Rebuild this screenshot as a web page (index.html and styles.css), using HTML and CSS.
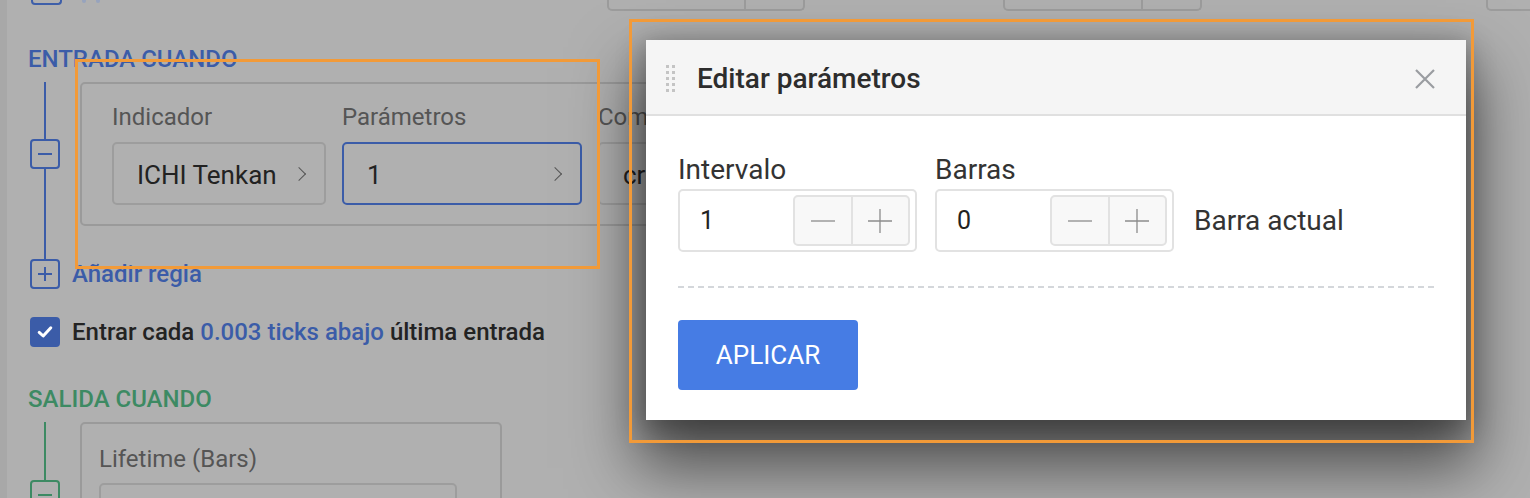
FILE: index.html
```html
<!DOCTYPE html>
<html lang="es">
<head>
<meta charset="utf-8">
<title>Editar parámetros</title>
<link rel="stylesheet" href="styles.css">
</head>
<body>
<div class="page">
  <div class="rail"></div>
  <main class="content">
    <div class="top-row">
      <span class="top-check"></span>
      <span class="top-marks"><i></i><i></i></span>
      <span class="top-input top-a"><span class="seg seg-main"></span><span class="seg seg-side"></span></span>
      <span class="top-input top-b"><span class="seg seg-main"></span><span class="seg seg-side"></span></span>
      <span class="top-input top-c"><span class="seg seg-main"></span></span>
    </div>

    <h3 class="sec-title blue">ENTRADA CUANDO</h3>
    <div class="rules">
      <div class="tree blue-tree">
        <span class="line l1"></span>
        <span class="tbox minus"></span>
        <span class="line l2"></span>
      </div>
      <div class="card card-entry">
        <div class="field">
          <div class="flabel">Indicador</div>
          <div class="select sel-ind"><span class="sval">ICHI Tenkan</span><span class="chev"></span></div>
        </div>
        <div class="field">
          <div class="flabel">Parámetros</div>
          <div class="select sel-par active"><span class="sval">1</span><span class="chev"></span></div>
        </div>
        <div class="field">
          <div class="flabel">Com</div>
          <div class="select sel-cmp"><span class="sval">cr</span></div>
        </div>
      </div>
    </div>
    <div class="add-rule">
      <span class="tbox plus blue-box"></span>
      <span class="add-text">Añadir regla</span>
    </div>
    <div class="check-row">
      <span class="checkbox"><svg viewBox="0 0 18 18" width="18" height="18"><path d="M3.2 9.4 L7.2 13 L14.8 4.8" fill="none" stroke="#fff" stroke-width="3" stroke-linecap="round" stroke-linejoin="round"/></svg></span>
      <span class="check-text">Entrar cada <span class="link">0.003 ticks abajo</span> última entrada</span>
    </div>

    <h3 class="sec-title green">SALIDA CUANDO</h3>
    <div class="rules rules-exit">
      <div class="tree green-tree">
        <span class="line l3"></span>
        <span class="tbox minus green-box"></span>
      </div>
      <div class="card card-exit">
        <div class="flabel">Lifetime (Bars)</div>
        <div class="exit-input"></div>
      </div>
    </div>
  </main>

  <div class="hl hl-left"></div>

  <div class="dialog">
    <div class="dlg-head">
      <span class="grip">
        <i></i><i></i><i></i><i></i><i></i><i></i><i></i><i></i><i></i><i></i>
      </span>
      <span class="dlg-title">Editar parámetros</span>
      <span class="close">
        <svg viewBox="0 0 22 22" width="22" height="22"><path d="M2 2 L20 20 M20 2 L2 20" stroke="#9a9da1" stroke-width="2.2" fill="none"/></svg>
      </span>
    </div>
    <div class="dlg-body">
      <div class="params">
        <div class="pfield">
          <div class="plabel">Intervalo</div>
          <div class="num">
            <span class="numval">1</span>
            <span class="stepper">
              <span class="step"><svg viewBox="0 0 26 26" width="26" height="26"><path d="M1 13 H25" stroke="#8c8c8c" stroke-width="1.3"/></svg></span>
              <span class="step"><svg viewBox="0 0 26 26" width="26" height="26"><path d="M1 13 H25 M13 1 V25" stroke="#8c8c8c" stroke-width="1.3"/></svg></span>
            </span>
          </div>
        </div>
        <div class="pfield">
          <div class="plabel">Barras</div>
          <div class="num">
            <span class="numval">0</span>
            <span class="stepper">
              <span class="step"><svg viewBox="0 0 26 26" width="26" height="26"><path d="M1 13 H25" stroke="#8c8c8c" stroke-width="1.3"/></svg></span>
              <span class="step"><svg viewBox="0 0 26 26" width="26" height="26"><path d="M1 13 H25 M13 1 V25" stroke="#8c8c8c" stroke-width="1.3"/></svg></span>
            </span>
          </div>
        </div>
        <div class="pnote">Barra actual</div>
      </div>
      <div class="dash"></div>
      <button class="apply">APLICAR</button>
    </div>
  </div>

  <div class="hl hl-right"></div>
</div>
</body>
</html>
```

FILE: styles.css
```css
* { box-sizing: border-box; }
html, body { margin: 0; padding: 0; }
body {
  width: 1530px;
  height: 498px;
  overflow: hidden;
  background: #b0b0b0;
  font-family: Roboto, "Liberation Sans", Arial, sans-serif;
}
.page {
  position: relative;
  width: 1530px;
  height: 498px;
  display: flex;
  overflow: hidden;
}
.rail {
  width: 7px;
  flex: none;
  background: #a8a8a8;
}
.content {
  flex: 1;
  padding-left: 21px;
  display: flex;
  flex-direction: column;
}

/* partial top row */
.top-row {
  height: 11px;
  display: flex;
  align-items: flex-end;
}
.top-check {
  margin-left: 3px;
  margin-bottom: 6px;
  width: 31px;
  height: 20px;
  border: 2px solid #3e5fa9;
  border-top: none;
  border-radius: 0 0 4px 4px;
}
.top-marks {
  margin-left: 20px;
  margin-bottom: 8px;
  display: flex;
  gap: 10px;
}
.top-marks i {
  display: block;
  width: 4px;
  height: 3px;
  border-radius: 0 0 2px 2px;
  background: #97a3bd;
}
.top-input {
  height: 30px;
  display: flex;
  border: 2px solid #9c9c9c;
  border-top: none;
  border-radius: 0 0 5px 5px;
}
.top-a { margin-left: 507px; width: 198px; }
.top-b { margin-left: 198px; width: 199px; }
.top-c { margin-left: 284px; width: 60px; }
.seg-main { width: 137px; border-right: 2px solid #9c9c9c; }
.top-b .seg-main { width: 138px; }
.top-c .seg-main { border-right: none; }

/* sections */
.sec-title {
  margin: 0;
  font-size: 24px;
  font-weight: 500;
  line-height: 24px;
}
.sec-title.blue { color: #3b5ca8; margin-top: 36px; }
.sec-title.green { color: #3d8a63; margin-top: 40px; }

.rules {
  display: flex;
  margin-top: 11px;
}
.rules-exit { margin-top: 11px; }
.tree {
  width: 52px;
  flex: none;
  display: flex;
  flex-direction: column;
  align-items: flex-start;
}
.line {
  display: block;
  width: 2px;
  margin-left: 16px;
}
.blue-tree .line { background: #3b5ca8; }
.l1 { height: 57px; }
.l2 { height: 90px; }
.green-tree .line { background: #3d8a63; }
.l3 { height: 58px; }
.tbox {
  display: block;
  position: relative;
  width: 30px;
  height: 30px;
  margin-left: 2px;
  border: 2px solid #3b5ca8;
  border-radius: 4px;
}
.tbox.green-box { border-color: #3d8a63; }
.tbox::before, .tbox.plus::after {
  content: "";
  position: absolute;
  left: 6px;
  top: 12px;
  width: 14px;
  height: 2px;
  background: #3b5ca8;
}
.tbox.green-box::before { background: #3d8a63; }
.tbox.plus::after {
  left: 12px;
  top: 6px;
  width: 2px;
  height: 14px;
}

.card {
  border: 2px solid #9a9a9a;
  border-radius: 5px;
}
.card-entry {
  width: 620px;
  height: 144px;
  padding: 18px 0 0 30px;
  display: flex;
  gap: 16px;
}
.field { display: flex; flex-direction: column; }
.flabel {
  font-size: 24px;
  line-height: 30px;
  color: #555;
  margin-bottom: 10px;
  white-space: nowrap;
}
.select {
  height: 63px;
  border: 2px solid #9d9d9d;
  border-radius: 5px;
  display: flex;
  align-items: center;
  padding: 3px 16px 0 23px;
  color: #222;
  font-size: 26px;
}
.sel-ind { width: 214px; }
.sel-par { width: 240px; border-color: #3b5ca8; }
.sel-cmp { width: 200px; }
.sval { flex: 1; }
.chev {
  width: 10px;
  height: 10px;
  border-right: 1.5px solid #555;
  border-top: 1.5px solid #555;
  transform: rotate(45deg);
  margin-right: 4px;
  margin-top: -2px;
}

.add-rule {
  display: flex;
  align-items: center;
  gap: 12px;
}
.add-text {
  font-size: 24px;
  line-height: 28px;
  font-weight: 500;
  color: #3b5ca8;
  margin-top: -1px;
}
.check-row {
  display: flex;
  align-items: center;
  gap: 12px;
  margin-top: 28px;
  margin-left: 2px;
}
.checkbox {
  width: 30px;
  height: 30px;
  border-radius: 4px;
  background: #3b5ca8;
  display: flex;
  align-items: center;
  justify-content: center;
}
.check-text {
  font-size: 24px;
  line-height: 28px;
  font-weight: 500;
  color: #232323;
}
.link { color: #3b5ca8; }

.card-exit {
  width: 422px;
  height: 120px;
  padding: 20px 0 0 17px;
}
.card-exit .flabel { margin-bottom: 9px; color: #555; }
.exit-input {
  width: 358px;
  height: 50px;
  border: 2px solid #9d9d9d;
  border-radius: 5px;
}

/* annotation highlights */
.hl {
  position: absolute;
  border: 3px solid #f29a38;
  pointer-events: none;
  z-index: 5;
}
.hl-left { left: 75px; top: 59px; width: 525px; height: 210px; }
.hl-right { left: 629px; top: 19px; width: 845px; height: 424px; }

/* dialog */
.dialog {
  position: absolute;
  left: 646px;
  top: 40px;
  width: 820px;
  height: 380px;
  background: #fff;
  box-shadow: 0 38px 60px 10px rgba(0,0,0,0.55), 0 6px 24px 4px rgba(0,0,0,0.25);
  z-index: 3;
  display: flex;
  flex-direction: column;
}
.dlg-head {
  height: 76px;
  flex: none;
  background: #f5f5f5;
  border-bottom: 2px solid #e0e0e0;
  display: flex;
  align-items: center;
  padding-left: 20px;
  padding-right: 30px;
}
.grip {
  width: 12px;
  display: grid;
  grid-template-columns: 3px 3px;
  column-gap: 3px;
  row-gap: 3px;
  margin-right: 19px;
  margin-top: 2px;
}
.grip i {
  display: block;
  width: 3px;
  height: 3px;
  background: #c4c4c4;
}
.dlg-title {
  flex: 1;
  font-size: 28px;
  line-height: 32px;
  font-weight: 500;
  color: #2d2d2d;
  margin-top: 3px;
}
.close { display: flex; margin-top: 4px; }

.dlg-body {
  padding: 38px 32px 0 32px;
}
.params {
  display: flex;
  align-items: flex-end;
  gap: 18px;
}
.pfield { display: flex; flex-direction: column; }
.plabel {
  font-size: 28px;
  line-height: 32px;
  color: #333;
  margin-bottom: 3px;
}
.num {
  width: 239px;
  height: 63px;
  border: 2px solid #e2e2e2;
  border-radius: 5px;
  display: flex;
  align-items: center;
  padding: 0 5px 0 20px;
}
.numval {
  flex: 1;
  font-size: 25px;
  color: #222;
}
.stepper {
  width: 117px;
  height: 51px;
  border: 2px solid #e2e2e2;
  border-radius: 5px;
  background: #f8f8f8;
  display: flex;
}
.step {
  flex: 1;
  display: flex;
  align-items: center;
  justify-content: center;
}
.step + .step { border-left: 2px solid #e2e2e2; }
.pnote {
  font-size: 28px;
  color: #333;
  height: 63px;
  line-height: 63px;
  margin-left: 2px;
}
.dash {
  margin-top: 34px;
  border-top: 2px dashed #d4d7db;
}
.apply {
  margin-top: 32px;
  width: 180px;
  height: 70px;
  border: none;
  border-radius: 4px;
  background: #467ce4;
  color: #fff;
  font-family: Roboto, "Liberation Sans", Arial, sans-serif;
  font-size: 26px;
  font-weight: 400;
  padding: 0;
}
```
